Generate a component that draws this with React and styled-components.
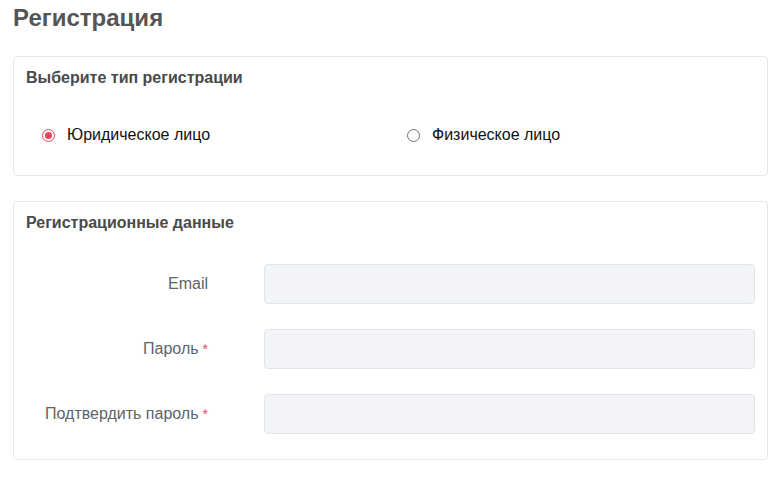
import React, { useState } from "react";
import styled, { createGlobalStyle } from "styled-components";

const GlobalStyle = createGlobalStyle`
    body {
        margin: 0;
        background: #fff;
        font-family: "Liberation Sans", Arial, sans-serif;
    }
`;

function App() {
    const [type, setType] = useState("legal");
    return (
        <Page>
            <GlobalStyle />
            <Title>Регистрация</Title>
            <Card>
                <CardTitle>Выберите тип регистрации</CardTitle>
                <RadioRow>
                    <RadioLabel onClick={() => setType("legal")}>
                        <RadioDot checked={type === "legal"} />
                        Юридическое лицо
                    </RadioLabel>
                    <RadioLabel onClick={() => setType("person")}>
                        <RadioDot checked={type === "person"} />
                        Физическое лицо
                    </RadioLabel>
                </RadioRow>
            </Card>
            <Card>
                <CardTitle>Регистрационные данные</CardTitle>
                <Fields>
                    <FieldLabel>Email</FieldLabel>
                    <Input type="email" />
                    <FieldLabel>
                        Пароль<Required>*</Required>
                    </FieldLabel>
                    <Input type="password" />
                    <FieldLabel>
                        Подтвердить пароль<Required>*</Required>
                    </FieldLabel>
                    <Input type="password" />
                </Fields>
            </Card>
        </Page>
    );
}

const Page = styled.div`
    padding: 4px 12px 0 13px;
`;

const Title = styled.h1`
    margin: 0 0 24px;
    font-size: 24px;
    line-height: 28px;
    font-weight: 700;
    color: #555;
`;

const Card = styled.div`
    border: 1px solid #e3e6ea;
    border-radius: 4px;
    background: #fff;
    margin-bottom: 25px;
    padding: 11px 12px 25px 12px;
`;

const CardTitle = styled.h2`
    margin: 0;
    font-size: 16px;
    line-height: 20px;
    font-weight: 700;
    color: #4a4a4a;
`;

const RadioRow = styled.div`
    display: grid;
    grid-template-columns: 365px 1fr;
    padding: 37px 0 5px 16px;
`;

const RadioLabel = styled.label`
    display: flex;
    align-items: center;
    gap: 12px;
    font-size: 16px;
    line-height: 20px;
    color: #111;
    cursor: pointer;
`;

const RadioDot = styled.span`
    box-sizing: border-box;
    width: 13px;
    height: 13px;
    border-radius: 50%;
    border: 1px solid ${(p) => (p.checked ? "#e8475d" : "#6f6f6f")};
    display: grid;
    place-items: center;
    &::after {
        content: "";
        width: 7px;
        height: 7px;
        border-radius: 50%;
        background: ${(p) => (p.checked ? "#e8475d" : "transparent")};
    }
`;

const Fields = styled.div`
    display: grid;
    grid-template-columns: 238px 1fr;
    row-gap: 25px;
    margin-top: 31px;
    align-items: center;
`;

const FieldLabel = styled.label`
    text-align: right;
    padding-right: 56px;
    font-size: 16px;
    color: #5c636a;
`;

const Required = styled.span`
    color: #e0526a;
    margin-left: 4px;
    font-size: 14px;
`;

const Input = styled.input`
    box-sizing: border-box;
    height: 40px;
    width: 100%;
    border: 1px solid #e1e5ea;
    border-radius: 4px;
    background: #f2f4f7;
    outline: none;
    font: inherit;
    padding: 0 12px;
`;

export default App;
